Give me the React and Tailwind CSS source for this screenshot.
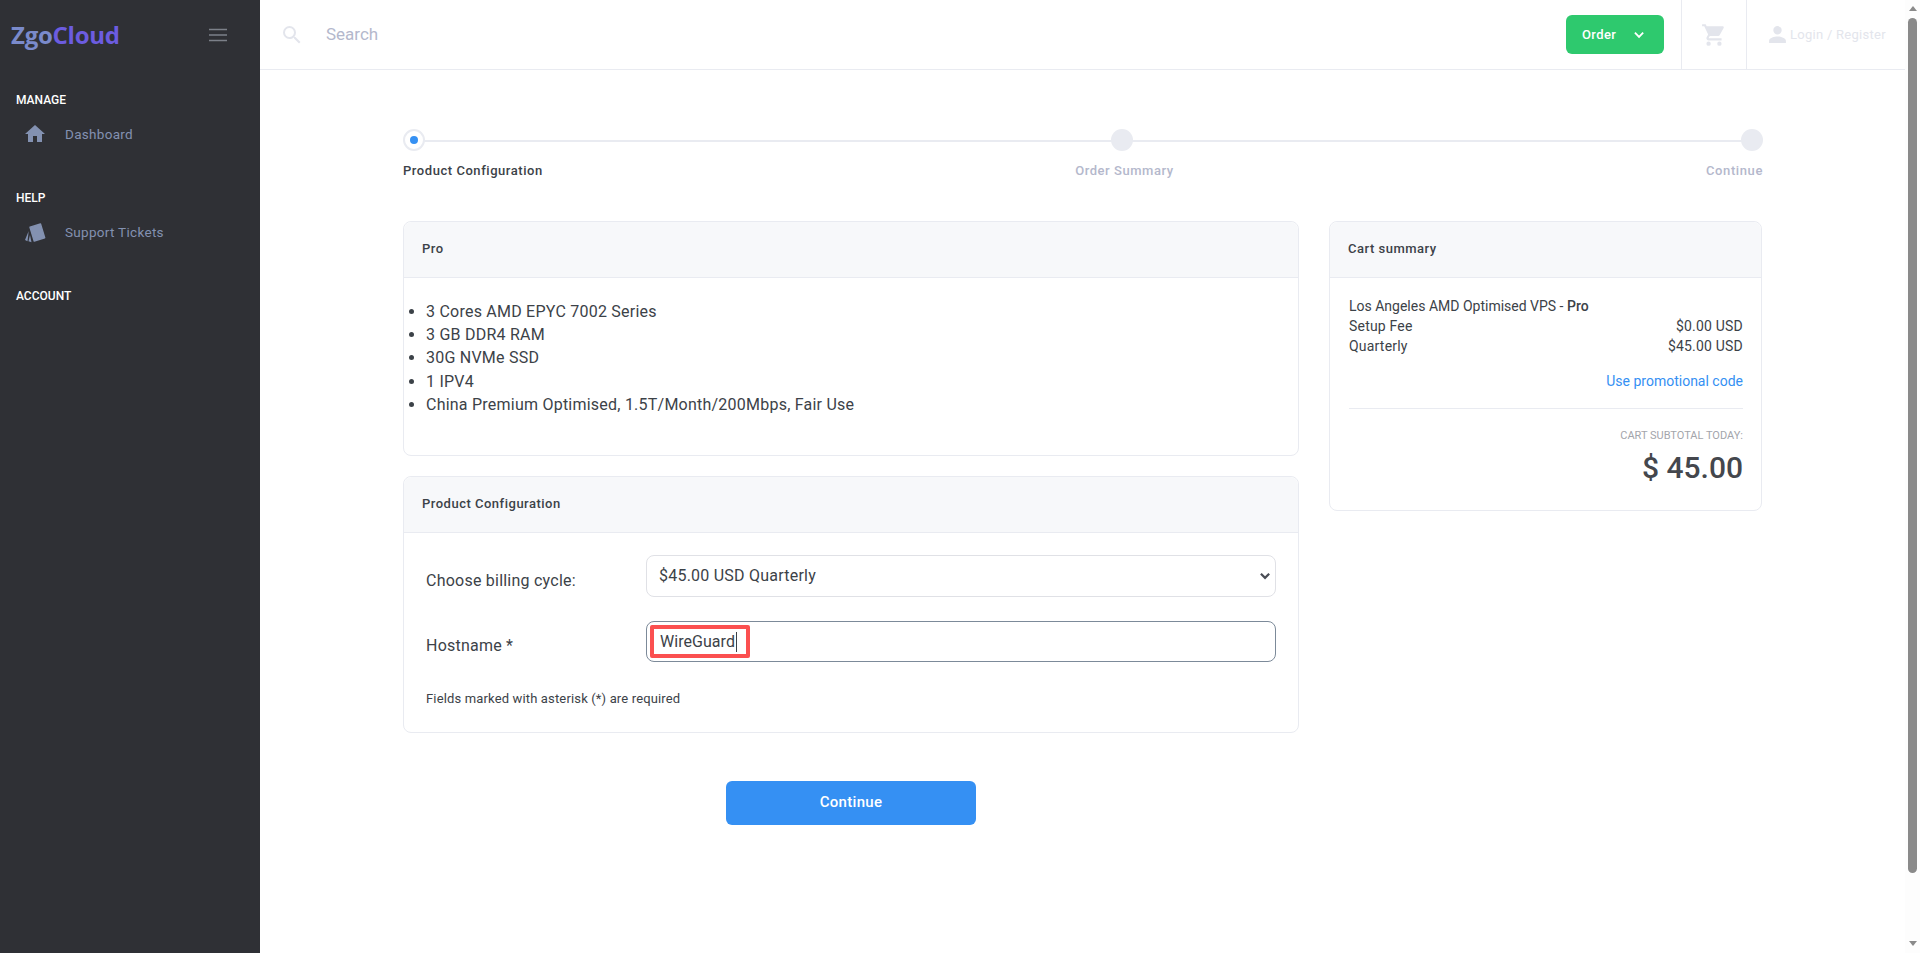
import React from "react";

const Card = ({ title, className = "", children }) => (
  <div className={`rounded-lg border border-[#e9ebf1] bg-white ${className}`}>
    <div className="flex h-[56px] items-center rounded-t-lg border-b border-[#e9ebf1] bg-[#f7f8fa] px-[18px] text-[13px] font-medium tracking-[0.5px] text-[#3c4248]">
      {title}
    </div>
    {children}
  </div>
);

const Home = () => (
  <svg viewBox="0 0 24 24" className="h-[24px] w-[24px] fill-[#8391b1]">
    <path d="M10 20v-6h4v6h5v-8h3L12 3 2 12h3v8z" />
  </svg>
);

const Tickets = () => (
  <svg viewBox="0 0 24 24" className="h-[24px] w-[24px] fill-[#8391b1]">
    <path d="M7 7.200 17.500 4 21.700 17.800 11.200 21z" stroke="#8391b1" strokeWidth="1.400" strokeLinejoin="round" />
    <path d="M5.700 11 2 20l2.500 1.300z" />
    <path d="M7 15 5.500 21.300l3 .9z" />
  </svg>
);

export default function App() {
  return (
    <div className="flex h-screen overflow-hidden bg-white font-['Roboto',sans-serif] text-[#3c4248]">
      <aside className="w-[260px] shrink-0 bg-[#2f3035]">
        <div className="flex h-[69px] items-center justify-between pl-[11px] pr-[33px]">
          <span className="font-['Open_Sans',sans-serif] text-[24px] font-bold leading-none tracking-[-0.25px] text-[#7a8acb]">
            Zgo<span className="text-[#6c5ce0]">Cloud</span>
          </span>
          <svg viewBox="0 0 18 14" className="h-[14px] w-[18px] stroke-[#7c8089]" strokeWidth="1.4">
            <path d="M0 1.500h18M0 7h18M0 12.500h18" />
          </svg>
        </div>
        <nav className="pt-[24px]">
          <div className="pl-[16px] text-[12px] font-medium leading-[15px] text-white">MANAGE</div>
          <div className="mt-[6px] flex h-[40px] items-center pl-[23px] text-[13.5px] tracking-[0.3px] text-[#8391b1]">
            <Home />
            <span className="ml-[18px]">Dashboard</span>
          </div>
          <div className="mt-[37px] pl-[16px] text-[12px] font-medium leading-[15px] text-white">HELP</div>
          <div className="mt-[6px] flex h-[40px] items-center pl-[23px] text-[13.5px] tracking-[0.3px] text-[#8391b1]">
            <Tickets />
            <span className="ml-[18px]">Support Tickets</span>
          </div>
          <div className="mt-[37px] pl-[16px] text-[12px] font-medium leading-[15px] text-white">ACCOUNT</div>
        </nav>
      </aside>

      <div className="flex min-w-0 flex-1 flex-col">
        <header className="flex h-[70px] shrink-0 items-stretch border-b border-[#e9ebf1]">
          <div className="flex flex-1 items-center pl-[20px]">
            <svg viewBox="0 0 24 24" className="h-[24px] w-[24px] fill-[#e3e5ec]">
              <path d="M15.500 14h-.79l-.28-.27A6.471 6.471 0 0 0 16 9.500 6.500 6.500 0 1 0 9.500 16c1.610 0 3.090-.59 4.230-1.570l.27.28v.79l5 4.990L20.490 19l-4.990-5zm-6 0C7.010 14 5 11.990 5 9.500S7.010 5 9.500 5 14 7.010 14 9.500 11.990 14 9.500 14z" />
            </svg>
            <span className="ml-[22px] text-[17px] text-[#b4b8cc]">Search</span>
          </div>
          <div className="flex items-center pr-[17px]">
            <div className="flex h-[39px] w-[98px] items-center justify-between rounded-md bg-[#2ec96e] pl-[16px] pr-[19px] text-[13px] font-medium tracking-[0.4px] text-white">
              Order
              <svg viewBox="0 0 12 8" className="h-[8px] w-[11px] fill-none stroke-white" strokeWidth="2">
                <path d="M1 1.500l4.500 4.500L10 1.500" />
              </svg>
            </div>
          </div>
          <div className="flex w-[65px] items-center justify-center border-l border-[#e9ebf1]">
            <svg viewBox="0 0 24 24" className="h-[26px] w-[26px] fill-[#e3e5ec]">
              <path d="M7 18a2 2 0 1 0 0 4 2 2 0 0 0 0-4zM1 2v2h2l3.600 7.600-1.400 2.400c-.1.300-.2.600-.2 1 0 1.100.9 2 2 2h12v-2H7.400a.25.25 0 0 1-.25-.25v-.1L8.100 13h7.500c.7 0 1.400-.4 1.700-1l3.600-6.500c.1-.2.1-.3.1-.5 0-.6-.4-1-1-1H5.200l-.9-2H1zm16 16a2 2 0 1 0 0 4 2 2 0 0 0 0-4z" />
            </svg>
          </div>
          <div className="flex w-[159px] items-center border-l border-[#e9ebf1] pl-[20px]">
            <svg viewBox="0 0 24 24" className="h-[21px] w-[21px] fill-[#e3e5ec]">
              <path d="M12 12a4.800 4.800 0 1 0 0-9.600 4.800 4.800 0 0 0 0 9.600zm0 2.400c-3.200 0-9.600 1.600-9.600 4.800v2.400h19.200v-2.400c0-3.200-6.400-4.800-9.600-4.800z" />
            </svg>
            <span className="ml-[2px] text-[13px] tracking-[0.27px] text-[#e3e5ec]">Login / Register</span>
          </div>
        </header>

        <main className="min-h-0 flex-1 px-[143px] pt-[59px]">
          <div className="relative -mr-[1px]">
            <div className="absolute left-[11px] right-[11px] top-[11px] h-[2px] bg-[#e9ebf1]" />
            <div className="relative flex items-start justify-between">
              <div className="flex flex-col items-start">
                <div className="flex h-[22px] w-[22px] items-center justify-center rounded-full border-2 border-[#e9ebf1] bg-white">
                  <div className="h-[8px] w-[8px] rounded-full bg-[#3590f3]" />
                </div>
                <span className="mt-[10px] text-[13px] font-medium tracking-[0.55px] text-[#3c4248]">Product Configuration</span>
              </div>
              <div className="flex flex-col items-center">
                <div className="mr-[4px] h-[22px] w-[22px] rounded-full bg-[#e9ebf1]" />
                <span className="mt-[10px] text-[13px] font-medium tracking-[0.55px] text-[#b4b8cc]">Order Summary</span>
              </div>
              <div className="flex flex-col items-end">
                <div className="h-[22px] w-[22px] rounded-full bg-[#e9ebf1]" />
                <span className="mt-[10px] text-[13px] font-medium tracking-[0.6px] text-[#b4b8cc]">Continue</span>
              </div>
            </div>
          </div>

          <div className="mt-[40px] flex items-start gap-[30px]">
            <div className="w-[896px] shrink-0">
              <Card title="Pro" className="h-[235px]">
                <ul className="list-disc pl-[22px] pt-[22px] text-[16px] leading-[23.4px] tracking-[0.23px]">
                  <li>3 Cores AMD EPYC 7002 Series</li>
                  <li>3 GB DDR4 RAM</li>
                  <li>30G NVMe SSD</li>
                  <li>1 IPV4</li>
                  <li>China Premium Optimised, 1.5T/Month/200Mbps, Fair Use</li>
                </ul>
              </Card>
              <Card title="Product Configuration" className="mt-[20px] h-[257px]">
                <div className="px-[22px] pt-[22px] tracking-[0.23px]">
                  <div className="flex items-center">
                    <label className="w-[220px] pt-[10px] text-[16px]">Choose billing cycle:</label>
                    <div className="flex h-[42px] flex-1 items-center justify-between rounded-lg border border-[#e0e1e6] pl-[12px] pr-[4px] text-[16px]">
                      $45.00 USD Quarterly
                      <svg viewBox="0 0 12 8" className="h-[8px] w-[11px] fill-none stroke-[#4a4d55]" strokeWidth="2.4">
                        <path d="M1 1.500l4.500 4.500L10 1.500" />
                      </svg>
                    </div>
                  </div>
                  <div className="mt-[24px] flex items-center">
                    <label className="w-[220px] pt-[9px] text-[16px]">Hostname *</label>
                    <div className="flex h-[41px] flex-1 items-center rounded-lg border border-[#7c8a99] pl-[3px]">
                      <div className="flex h-[33px] w-[100px] items-center gap-px rounded-[2px] border-4 border-[#fb5050] pl-[6px] pt-[1px] text-[16px] tracking-[0.05px]">
                        WireGuard<span className="h-[20px] w-px bg-[#3c4248]" />
                      </div>
                    </div>
                  </div>
                  <p className="mt-[29px] text-[13px] leading-[15px] tracking-[0.15px]">Fields marked with asterisk (*) are required</p>
                </div>
              </Card>
              <div className="mt-[48px] flex justify-center">
                <div className="flex h-[44px] w-[250px] items-center justify-center rounded-md bg-[#3590f3] text-[15px] font-medium tracking-[0.3px] text-white">
                  Continue
                </div>
              </div>
            </div>

            <Card title="Cart summary" className="h-[290px] flex-1">
              <div className="pl-[19px] pr-[18px] pt-[18px] text-[14px] leading-[20px]">
                <div>
                  Los Angeles AMD Optimised VPS - <span className="font-medium">Pro</span>
                </div>
                <div className="flex justify-between">
                  <span className="tracking-[0.2px]">Setup Fee</span>
                  <span className="tracking-[0.2px]">$0.00 USD</span>
                </div>
                <div className="flex justify-between">
                  <span className="tracking-[0.2px]">Quarterly</span>
                  <span className="tracking-[0.2px]">$45.00 USD</span>
                </div>
                <div className="mt-[15px] text-right text-[#3590f3]">Use promotional code</div>
                <div className="mt-[17px] border-t border-[#e9ebf1]" />
                <div className="mt-[20px] text-right text-[11px] leading-[13px] text-[#a3a5ab]">CART SUBTOTAL TODAY:</div>
                <div className="mt-[9px] text-right text-[30px] font-medium leading-[34px] text-[#44474d]">$ 45.00</div>
              </div>
            </Card>
          </div>
        </main>
      </div>

      <div className="flex w-[15px] shrink-0 flex-col items-center bg-[#fdfdfd] pb-[7px] pt-[6px]">
        <div className="h-0 w-0 border-x-[4px] border-b-[5px] border-x-transparent border-b-[#8a8a8a]" />
        <div className="mt-[7px] h-[855px] w-[9px] rounded-full bg-[#8a8a8a]" />
        <div className="mt-auto h-0 w-0 border-x-[4px] border-t-[5px] border-x-transparent border-t-[#8a8a8a]" />
      </div>
    </div>
  );
}
